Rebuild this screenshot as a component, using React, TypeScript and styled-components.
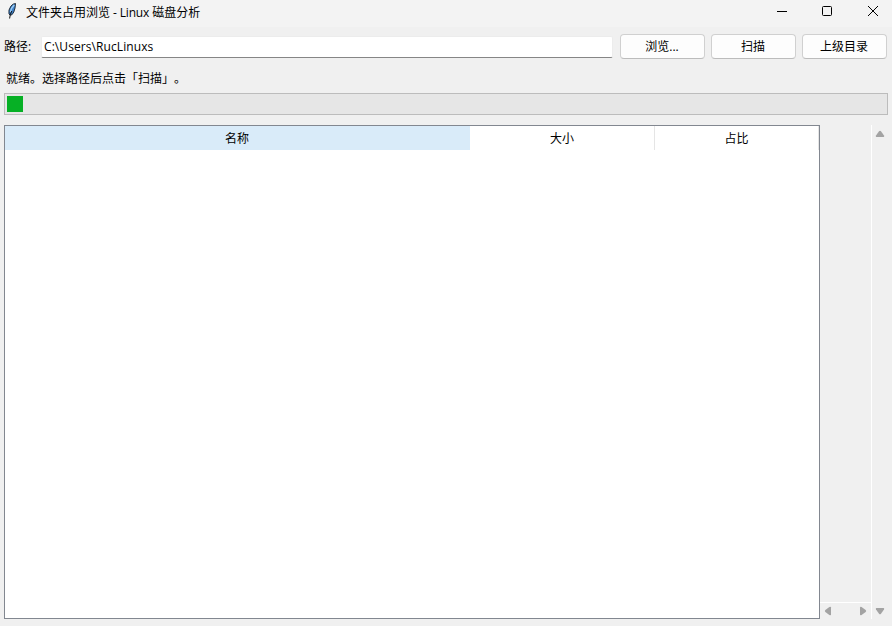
import React from "react";
import styled, { createGlobalStyle } from "styled-components";

const GlobalStyle = createGlobalStyle`
  * { box-sizing: border-box; }
  body { margin: 0; overflow: hidden; background: #f0f0f0; }
`;

const Window = styled.div`
  width: 892px;
  height: 626px;
  display: flex;
  flex-direction: column;
  overflow: hidden;
  background: #f0f0f0;
  color: #000;
  font: 12px/16px "Open Sans", "Noto Sans CJK SC", sans-serif;
  white-space: nowrap;
`;

const TitleBar = styled.header`
  height: 27px;
  flex: none;
  display: flex;
  align-items: flex-start;
  background: #f3f3f3;
`;

const AppIcon = styled.svg`
  width: 16px;
  height: 20px;
  margin: 2px 6px 0 4px;
`;

const Title = styled.div`
  flex: 1;
  padding-top: 5px;
`;

const Latin = styled.span`
  letter-spacing: -0.15px;
`;

const WindowControls = styled.div`
  display: flex;
  margin-right: -4px;
`;

const ControlButton = styled.button<{ $width: number }>`
  width: ${(p) => p.$width}px;
  height: 22px;
  padding: 0;
  border: 0;
  background: transparent;
  display: flex;
  align-items: center;
  justify-content: center;
`;

const Toolbar = styled.div`
  height: 32px;
  flex: none;
  display: flex;
  padding: 7px 5px 0 4px;
`;

const Label = styled.label`
  width: 37px;
  padding-top: 5px;
`;

const PathInput = styled.input`
  width: 572px;
  height: 22px;
  margin: 2px 7px 0 0;
  padding: 0 2px 1px;
  border: 1px solid #ececec;
  border-bottom-color: #868686;
  border-radius: 2px;
  outline: 0;
  background: #fff;
  color: #000;
  font: inherit;
  letter-spacing: 0.08px;
`;

const PushButton = styled.button`
  width: 85px;
  height: 25px;
  padding: 1px 1px 0 0;
  border: 1px solid #d0d0d0;
  border-bottom-color: #bcbcbc;
  border-radius: 4px;
  background: #fdfdfd;
  color: #000;
  font: inherit;
  & + & { margin-left: 6px; }
`;

const Status = styled.div`
  height: 34px;
  flex: none;
  padding: 12px 6px 0;
  text-spacing-trim: space-all;
  font-kerning: none;
`;

const ProgressTrack = styled.div`
  height: 22px;
  flex: none;
  margin: 0 4px 10px;
  padding: 2px;
  border: 1px solid #bcbcbc;
  background: #e6e6e6;
`;

const ProgressChunk = styled.div`
  width: 16px;
  height: 16px;
  background: #06b025;
`;

const Content = styled.main`
  height: 494px;
  display: flex;
  padding-left: 4px;
`;

const Tree = styled.div`
  width: 816px;
  border: 1px solid #828790;
  background: #fff;
`;

const TreeHeader = styled.div`
  height: 24px;
  display: grid;
  grid-template-columns: 465px 185px 164px;
`;

const HeaderCell = styled.div<{ $active?: boolean }>`
  display: flex;
  align-items: center;
  justify-content: center;
  padding: 1px ${(p) => (p.$active ? "1px" : "0")} 0 0;
  background: ${(p) => (p.$active ? "#d9ebf9" : "#fff")};
  border-right: ${(p) => (p.$active ? "0" : "1px solid #e5e5e5")};
`;

const HorizontalColumn = styled.div`
  width: 51px;
  display: flex;
  flex-direction: column;
  justify-content: flex-end;
`;

const HorizontalScroll = styled.div`
  height: 17px;
  border-top: 1px solid #fff;
  display: flex;
  align-items: center;
  justify-content: space-between;
  padding: 0 3px;
`;

const VerticalScroll = styled.div`
  width: 18px;
  border-left: 1px solid #fff;
  display: flex;
  flex-direction: column;
  align-items: center;
  justify-content: space-between;
  padding: 4px 1px 3px 0;
`;

const Arrow = styled.svg<{ $turn: number }>`
  width: 10px;
  height: 10px;
  transform: rotate(${(p) => p.$turn}deg);
`;

const ScrollArrow = ({ turn }: { turn: number }) => (
  <Arrow $turn={turn} viewBox="0 0 10 10">
    <path d="M4 2.3Q5 1.3 6 2.3L9 6.4Q9.6 8 8.6 8H1.4Q.4 8 1 6.4Z" fill="#a3a3a3" />
  </Arrow>
);

export default function App() {
  return (
    <Window>
      <GlobalStyle />
      <TitleBar>
        <AppIcon viewBox="0 0 16 20">
          <path d="M5 12Q4 8 7 4Q9 1.5 11.5 1.5Q11.5 6 9.8 10Q8 14 6 13Z" fill="#3f82cb" stroke="#17202b" strokeWidth=".9" />
          <path d="M10.2 3Q7 6 6.5 10" fill="none" stroke="#9ccdf5" strokeWidth="1.5" />
          <path d="M7.8 9Q6 12 5.6 16.5" fill="none" stroke="#111" />
        </AppIcon>
        <Title>文件夹占用浏览<Latin> - Linux </Latin>磁盘分析</Title>
        <WindowControls>
          <ControlButton $width={44} aria-label="最小化">
            <svg width="12" height="12"><path d="M1 6.5H11" stroke="#000" /></svg>
          </ControlButton>
          <ControlButton $width={46} aria-label="最大化">
            <svg width="10" height="10"><rect x=".5" y=".5" width="9" height="9" rx="1" fill="none" stroke="#000" /></svg>
          </ControlButton>
          <ControlButton $width={46} aria-label="关闭">
            <svg width="12" height="12"><path d="M1 1L11 11M11 1L1 11" stroke="#000" /></svg>
          </ControlButton>
        </WindowControls>
      </TitleBar>
      <Toolbar>
        <Label htmlFor="path">路径:</Label>
        <PathInput id="path" defaultValue="C:\Users\RucLinuxs" />
        <PushButton>浏览...</PushButton>
        <PushButton>扫描</PushButton>
        <PushButton>上级目录</PushButton>
      </Toolbar>
      <Status>就绪。选择路径后点击「扫描」。</Status>
      <ProgressTrack><ProgressChunk /></ProgressTrack>
      <Content>
        <Tree>
          <TreeHeader>
            <HeaderCell $active>名称</HeaderCell>
            <HeaderCell>大小</HeaderCell>
            <HeaderCell>占比</HeaderCell>
          </TreeHeader>
        </Tree>
        <HorizontalColumn>
          <HorizontalScroll>
            <ScrollArrow turn={-90} />
            <ScrollArrow turn={90} />
          </HorizontalScroll>
        </HorizontalColumn>
        <VerticalScroll>
          <ScrollArrow turn={0} />
          <ScrollArrow turn={180} />
        </VerticalScroll>
      </Content>
    </Window>
  );
}
